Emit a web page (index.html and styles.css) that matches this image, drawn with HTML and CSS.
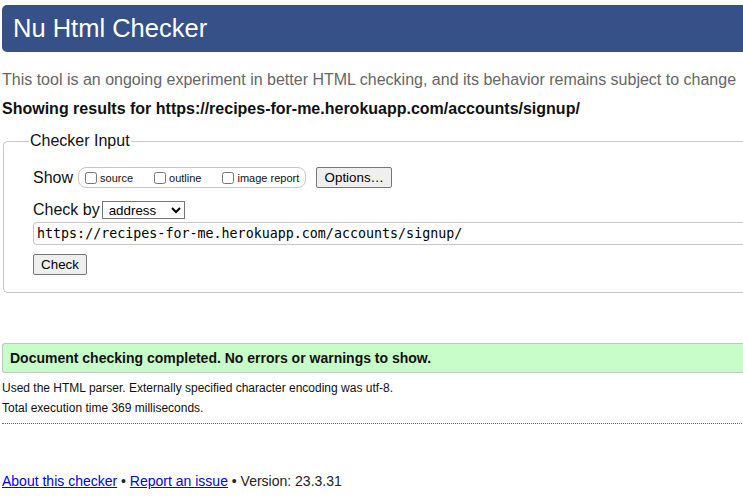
FILE: index.html
```html
<!DOCTYPE html>
<html lang="en">
<head>
<meta charset="utf-8">
<title>Showing results for https://recipes-for-me.herokuapp.com/accounts/signup/ - Nu Html Checker</title>
<link rel="stylesheet" href="styles.css">
</head>
<body>
<div class="page">
  <h1 class="masthead">Nu Html Checker</h1>
  <p class="intro">This tool is an ongoing experiment in better HTML checking, and its behavior remains subject to change</p>
  <p class="results-for">Showing results for https://recipes-for-me.herokuapp.com/accounts/signup/</p>
  <form class="checker">
    <fieldset class="checker-input">
      <legend class="checker-legend">Checker Input</legend>
      <div class="row show-row">
        <span class="label">Show</span>
        <fieldset class="show-options">
          <label class="opt"><input type="checkbox" class="cb"><span>source</span></label>
          <label class="opt"><input type="checkbox" class="cb"><span>outline</span></label>
          <label class="opt"><input type="checkbox" class="cb"><span>image report</span></label>
        </fieldset>
        <button type="button" class="btn options-btn">Options…</button>
      </div>
      <div class="row checkby-row">
        <span class="label">Check by</span>
        <select class="select"><option>address</option></select>
      </div>
      <div class="row url-row">
        <input type="url" class="url" value="https://recipes-for-me.herokuapp.com/accounts/signup/">
      </div>
      <div class="row submit-row">
        <button type="button" class="btn check-btn">Check</button>
      </div>
    </fieldset>
  </form>
  <p class="success">Document checking completed. No errors or warnings to show.</p>
  <p class="details">Used the HTML parser. Externally specified character encoding was utf-8.</p>
  <p class="details">Total execution time 369 milliseconds.</p>
  <hr class="divider">
  <p class="footer"><a href="#" class="link">About this checker</a> • <a href="#" class="link">Report an issue</a> • Version: 23.3.31</p>
</div>
</body>
</html>
```
FILE: styles.css
```css
html, body {
  margin: 0;
  padding: 0;
  overflow: hidden;
  background: #fff;
}
body {
  font-family: "Liberation Sans", Arial, Helvetica, sans-serif;
  color: #111;
  font-size: 16px;
}
.page {
  width: 900px;
  padding: 5px 0 0 2px;
}
.masthead {
  margin: 0;
  height: 47px;
  line-height: 47px;
  padding-left: 11px;
  background: #365088;
  color: #fff;
  font-size: 25.5px;
  font-weight: normal;
  border-radius: 5px 0 0 5px;
}
.intro {
  margin: 19px 0 0 0;
  color: #666;
  font-size: 16px;
  line-height: 18px;
  white-space: nowrap;
}
.results-for {
  margin: 11px 0 0 0;
  font-weight: bold;
  font-size: 16px;
  line-height: 18px;
  white-space: nowrap;
}
.checker { margin: 0; }
.checker-input {
  margin: 14px 0 0 1px;
  padding: 10px 0 17px 29px;
  border: 1px solid #c8c8c8;
  border-radius: 5px 0 0 5px;
  border-right: none;
}
.checker-legend {
  font-size: 16px;
  padding: 0 1px;
  margin-left: -4px;
  line-height: 18px;
}
.row {
  display: flex;
  align-items: center;
}
.label {
  font-size: 16px;
  line-height: 18px;
}
.show-row { margin-top: 7px; }
.show-options {
  margin: 0 0 0 5px;
  padding: 0 6px 0 6px;
  height: 19px;
  display: flex;
  align-items: center;
  border: 1px solid #c8c8c8;
  border-radius: 8px;
  min-inline-size: auto;
}
.opt {
  display: flex;
  align-items: center;
  font-size: 11px;
  margin-right: 21px;
}
.opt:last-child { margin-right: 0; }
.cb {
  margin: 0 3px 0 0;
  width: 12px;
  height: 12px;
}
.btn {
  font-family: "Liberation Sans", Arial, sans-serif;
  font-size: 13.33px;
  background: #efefef;
  border: 1px solid #767676;
  border-radius: 2px;
  color: #000;
  padding: 1px 6px;
  height: 21px;
  box-sizing: border-box;
}
.options-btn { margin-left: 10px; width: 76px; }
.checkby-row { margin-top: 13px; }
.select {
  margin-left: 2px;
  width: 83px;
  height: 18px;
  font-family: "Liberation Sans", Arial, sans-serif;
  font-size: 13.33px;
  border: 1px solid #767676;
  border-radius: 0;
  background: #fff;
  padding: 0 2px;
}
.url-row { margin-top: 3px; }
.url {
  width: 900px;
  height: 23px;
  box-sizing: border-box;
  font-family: "DejaVu Sans Mono", monospace;
  font-size: 13.33px;
  border: 1px solid #c8c8c8;
  border-right: none;
  border-radius: 4px 0 0 4px;
  padding: 0 3px;
  color: #000;
}
.submit-row { margin-top: 9px; }
.check-btn { width: 54px; }
.success {
  margin: 50px 0 0 0;
  height: 28px;
  line-height: 28px;
  background: #c8fcc8;
  border: 1px solid #c4c4c4;
  border-right: none;
  border-radius: 3px 0 0 3px;
  padding-left: 7px;
  font-size: 14px;
  font-weight: bold;
}
.details {
  margin: 8px 0 0 0;
  font-size: 12px;
  line-height: 14px;
}
.details + .details { margin-top: 6px; }
.divider {
  margin: 8px 0 0 0;
  border: none;
  border-top: 1px dotted #666;
  height: 0;
}
.footer {
  margin: 49px 0 0 0;
  font-size: 14px;
  line-height: 16px;
  color: #222;
}
.link { color: #00e; }
```
